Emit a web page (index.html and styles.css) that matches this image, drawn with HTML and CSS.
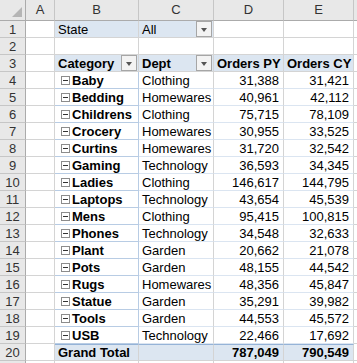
FILE: index.html
```html
<!DOCTYPE html>
<html>
<head>
<meta charset="utf-8">
<link rel="stylesheet" href="styles.css">
</head>
<body>
<div class="sheet">
  <div class="hd corner"><span class="tri"></span></div>
  <div class="hd col">A</div>
  <div class="hd col">B</div>
  <div class="hd col">C</div>
  <div class="hd col">D</div>
  <div class="hd col">E</div>
  <div class="hd col"></div>

  <div class="hd rn">1</div>
  <div class="c"></div>
  <div class="c pv-head">State</div>
  <div class="c pv-head dd">All<span class="btn"></span></div>
  <div class="c"></div>
  <div class="c"></div>
  <div class="c"></div>

  <div class="hd rn">2</div>
  <div class="c"></div>
  <div class="c"></div>
  <div class="c"></div>
  <div class="c"></div>
  <div class="c"></div>
  <div class="c"></div>

  <div class="hd rn">3</div>
  <div class="c"></div>
  <div class="c pv-head b dd">Category<span class="btn"></span></div>
  <div class="c pv-head b dd">Dept<span class="btn"></span></div>
  <div class="c pv-head b">Orders PY</div>
  <div class="c pv-head b">Orders CY</div>
  <div class="c"></div>

  <div class="hd rn">4</div><div class="c"></div><div class="c lab"><span class="cb"></span>Baby</div><div class="c pv">Clothing</div><div class="c pv num">31,388</div><div class="c pv num">31,421</div><div class="c"></div>
  <div class="hd rn">5</div><div class="c"></div><div class="c lab"><span class="cb"></span>Bedding</div><div class="c pv">Homewares</div><div class="c pv num">40,961</div><div class="c pv num">42,112</div><div class="c"></div>
  <div class="hd rn">6</div><div class="c"></div><div class="c lab"><span class="cb"></span>Childrens</div><div class="c pv">Clothing</div><div class="c pv num">75,715</div><div class="c pv num">78,109</div><div class="c"></div>
  <div class="hd rn">7</div><div class="c"></div><div class="c lab"><span class="cb"></span>Crocery</div><div class="c pv">Homewares</div><div class="c pv num">30,955</div><div class="c pv num">33,525</div><div class="c"></div>
  <div class="hd rn">8</div><div class="c"></div><div class="c lab"><span class="cb"></span>Curtins</div><div class="c pv">Homewares</div><div class="c pv num">31,720</div><div class="c pv num">32,542</div><div class="c"></div>
  <div class="hd rn">9</div><div class="c"></div><div class="c lab"><span class="cb"></span>Gaming</div><div class="c pv">Technology</div><div class="c pv num">36,593</div><div class="c pv num">34,345</div><div class="c"></div>
  <div class="hd rn">10</div><div class="c"></div><div class="c lab"><span class="cb"></span>Ladies</div><div class="c pv">Clothing</div><div class="c pv num">146,617</div><div class="c pv num">144,795</div><div class="c"></div>
  <div class="hd rn">11</div><div class="c"></div><div class="c lab"><span class="cb"></span>Laptops</div><div class="c pv">Technology</div><div class="c pv num">43,654</div><div class="c pv num">45,539</div><div class="c"></div>
  <div class="hd rn">12</div><div class="c"></div><div class="c lab"><span class="cb"></span>Mens</div><div class="c pv">Clothing</div><div class="c pv num">95,415</div><div class="c pv num">100,815</div><div class="c"></div>
  <div class="hd rn">13</div><div class="c"></div><div class="c lab"><span class="cb"></span>Phones</div><div class="c pv">Technology</div><div class="c pv num">34,548</div><div class="c pv num">32,633</div><div class="c"></div>
  <div class="hd rn">14</div><div class="c"></div><div class="c lab"><span class="cb"></span>Plant</div><div class="c pv">Garden</div><div class="c pv num">20,662</div><div class="c pv num">21,078</div><div class="c"></div>
  <div class="hd rn">15</div><div class="c"></div><div class="c lab"><span class="cb"></span>Pots</div><div class="c pv">Garden</div><div class="c pv num">48,155</div><div class="c pv num">44,542</div><div class="c"></div>
  <div class="hd rn">16</div><div class="c"></div><div class="c lab"><span class="cb"></span>Rugs</div><div class="c pv">Homewares</div><div class="c pv num">48,356</div><div class="c pv num">45,847</div><div class="c"></div>
  <div class="hd rn">17</div><div class="c"></div><div class="c lab"><span class="cb"></span>Statue</div><div class="c pv">Garden</div><div class="c pv num">35,291</div><div class="c pv num">39,982</div><div class="c"></div>
  <div class="hd rn">18</div><div class="c"></div><div class="c lab"><span class="cb"></span>Tools</div><div class="c pv">Garden</div><div class="c pv num">44,553</div><div class="c pv num">45,572</div><div class="c"></div>
  <div class="hd rn">19</div><div class="c"></div><div class="c lab"><span class="cb"></span>USB</div><div class="c pv">Technology</div><div class="c pv num">22,466</div><div class="c pv num">17,692</div><div class="c"></div>

  <div class="hd rn">20</div>
  <div class="c"></div>
  <div class="c gt b">Grand Total</div>
  <div class="c gt"></div>
  <div class="c gt b num">787,049</div>
  <div class="c gt b num">790,549</div>
  <div class="c"></div>

  <div class="hd rn"></div><div class="c"></div><div class="c"></div><div class="c"></div><div class="c"></div><div class="c"></div><div class="c"></div>
</div>
</body>
</html>
```

FILE: styles.css
```css
html, body {
  margin: 0;
  padding: 0;
  background: #ffffff;
  overflow: hidden;
}
.sheet {
  display: grid;
  grid-template-columns: 26px 29px 84px 75px 70px 70px 60px;
  grid-template-rows: 21px;
  grid-auto-rows: 17px;
  width: 357px;
  font-family: "Liberation Sans", Arial, sans-serif;
  font-size: 13px;
  color: #000;
}
.c {
  position: relative;
  box-sizing: border-box;
  border-right: 1px solid #d4d4d4;
  border-bottom: 1px solid #d4d4d4;
  padding: 1px 3px 0;
  line-height: 15px;
  white-space: nowrap;
  overflow: hidden;
}
.hd {
  box-sizing: border-box;
  background: #e8e8e8;
  border-right: 1px solid #ababab;
  border-bottom: 1px solid #ababab;
  color: #333;
  text-align: center;
  line-height: 20px;
}
.hd.col {
  line-height: 20px;
  border-right-color: #c6c6c6;
}
.hd.rn {
  padding-top: 1px;
  line-height: 15px;
  border-bottom-color: #c6c6c6;
}
.corner {
  position: relative;
}
.tri {
  position: absolute;
  right: 3px;
  bottom: 3px;
  width: 0;
  height: 0;
  border-left: 10px solid transparent;
  border-bottom: 10px solid #b5b5b5;
}
.pv-head {
  background: #dce6f1;
}
.b {
  font-weight: bold;
}
.dd {
  padding-right: 18px;
}
.btn {
  position: absolute;
  right: 1px;
  top: 0;
  width: 16px;
  height: 16px;
  box-sizing: border-box;
  border: 1px solid #a6a6a6;
  background: #f3f3f3;
}
.btn::after {
  content: "";
  position: absolute;
  left: 4px;
  top: 6px;
  width: 0;
  height: 0;
  border-left: 3.5px solid transparent;
  border-right: 3.5px solid transparent;
  border-top: 4px solid #555;
}
.lab {
  font-weight: bold;
  padding-left: 6px;
  border-right-color: #b8cce4;
  border-bottom-color: #b8cce4;
  display: flex;
  align-items: center;
  gap: 2px;
}
.cb {
  position: relative;
  flex: none;
  width: 9px;
  height: 9px;
  box-sizing: border-box;
  border: 1px solid #8c8c8c;
  background: #fff;
}
.cb::after {
  content: "";
  position: absolute;
  left: 1px;
  top: 3px;
  width: 5px;
  height: 1px;
  background: #333;
}
.pv {
  border-bottom-color: #dbe5f1;
}
.num {
  text-align: right;
  padding-right: 4px;
}
.gt {
  background: #dce6f1;
  border-top: 1px solid #95b3d7;
  line-height: 14px;
}
```
